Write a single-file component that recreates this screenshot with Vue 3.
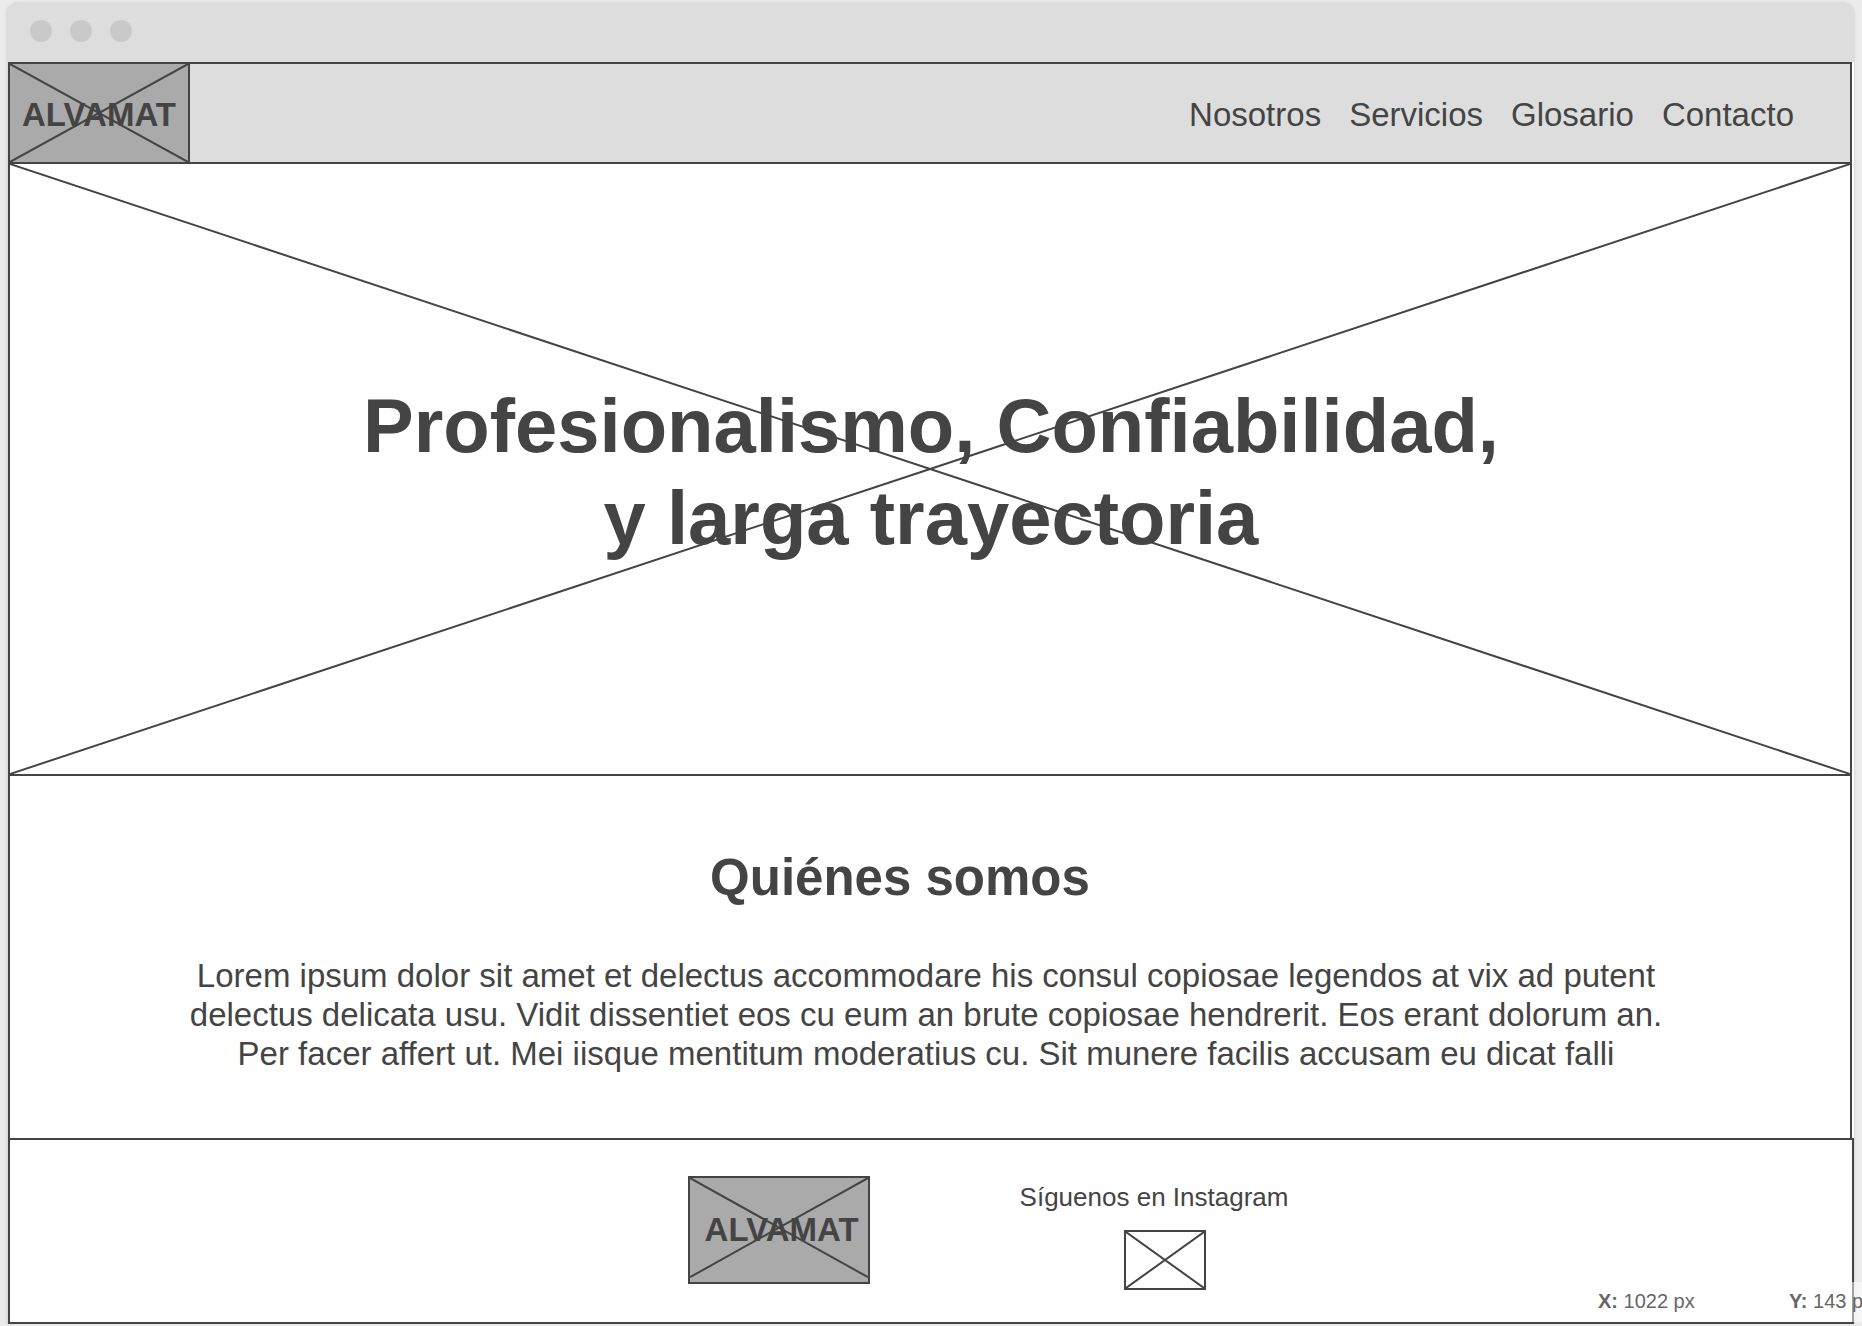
<script setup>
const links = ['Nosotros', 'Servicios', 'Glosario', 'Contacto']
const pointer = [
  { axis: 'X', value: 1022 },
  { axis: 'Y', value: 143 },
]
</script>

<template>
  <div class="canvas">
    <div class="window">
      <div class="titlebar">
        <span v-for="n in 3" :key="n" class="dot"></span>
      </div>
      <div class="page">
        <header class="topbar">
          <div class="logo">
            <svg class="cross" viewBox="0 0 100 100" preserveAspectRatio="none" aria-hidden="true">
              <path d="M0 0L100 100M100 0L0 100" />
            </svg>
            <span class="brand">ALVAMAT</span>
          </div>
          <nav class="nav">
            <a v-for="link in links" :key="link" href="#">{{ link }}</a>
          </nav>
        </header>

        <section class="hero">
          <svg class="cross" viewBox="0 0 100 100" preserveAspectRatio="none" aria-hidden="true">
            <path d="M0 0L100 100M100 0L0 100" />
          </svg>
          <h1>Profesionalismo, Confiabilidad,<br />y larga trayectoria</h1>
        </section>

        <section class="about">
          <h2>Quiénes somos</h2>
          <p>
            Lorem ipsum dolor sit amet et delectus accommodare his consul copiosae legendos at vix ad putent<br />
            delectus delicata usu. Vidit dissentiet eos cu eum an brute copiosae hendrerit. Eos erant dolorum an.<br />
            Per facer affert ut. Mei iisque mentitum moderatius cu. Sit munere facilis accusam eu dicat falli
          </p>
        </section>

        <footer class="footer">
          <div class="logo boxed">
            <svg class="cross" viewBox="0 0 100 108" preserveAspectRatio="none" aria-hidden="true">
              <path d="M0 0L100 103M100 0L0 103" />
            </svg>
            <span class="brand">ALVAMAT</span>
          </div>
          <div class="social">
            <span id="follow">Síguenos en Instagram</span>
            <a class="picture" href="#" aria-labelledby="follow">
              <svg class="cross" viewBox="0 0 100 100" preserveAspectRatio="none" aria-hidden="true">
                <path d="M0 0L100 100M100 0L0 100" />
              </svg>
            </a>
          </div>
        </footer>
      </div>
    </div>
    <div class="coords">
      <span v-for="p in pointer" :key="p.axis"><b>{{ p.axis }}:</b> {{ p.value }} px</span>
    </div>
  </div>
</template>

<style>
body {
  margin: 0;
  background: #ececec;
}
</style>

<style scoped>
.canvas {
  position: relative;
  overflow: hidden;
  padding: 2px 7px 2px 6px;
  background: #ececec;
  color: #444;
  font-family: "Liberation Sans", Arial, sans-serif;
}
.window {
  border-radius: 12px 12px 0 0;
  background: #ddd;
  box-shadow: 0 0 4px rgba(0, 0, 0, 0.06);
}
.titlebar {
  box-sizing: border-box;
  height: 60px;
  padding: 18px 24px;
  display: flex;
  gap: 18px;
}
.dot {
  width: 22px;
  height: 22px;
  border-radius: 50%;
  background: #c9c9c9;
}
.page {
  margin: 0 1px 0 2px;
  background: #fff;
}
.topbar,
.hero,
.about {
  margin-right: 2px;
  border: 2px solid #444;
}
.topbar {
  display: flex;
  justify-content: space-between;
  background: #ddd;
}
.logo {
  position: relative;
  box-sizing: border-box;
  width: 180px;
  min-height: 98px;
  padding-top: 4px;
  display: flex;
  align-items: center;
  justify-content: center;
  border-right: 2px solid #444;
  background: #aaa;
}
.logo.boxed {
  width: 182px;
  height: 108px;
  padding: 0 0 0 6px;
  border: 2px solid #444;
}
.brand {
  position: relative;
  font-size: 33px;
  font-weight: bold;
}
.cross {
  position: absolute;
  inset: 0;
  width: 100%;
  height: 100%;
}
.cross path {
  fill: none;
  stroke: #444;
  stroke-width: 2px;
  vector-effect: non-scaling-stroke;
}
.nav {
  display: flex;
  align-items: center;
  gap: 28px;
  padding: 4px 56px 0 0;
  font-size: 33px;
}
.nav a {
  color: inherit;
  text-decoration: none;
}
.hero {
  position: relative;
  box-sizing: border-box;
  min-height: 612px;
  padding: 216px 0 0 2px;
  border-top: 0;
  text-align: center;
}
h1 {
  position: relative;
  margin: 0;
  font-size: 76px;
  line-height: 92px;
}
.about {
  padding: 72px 8px 65px 0;
  border-top: 0;
  text-align: center;
}
h2 {
  margin: 0 52px 48px 0;
  font-size: 51px;
  line-height: 60px;
}
p {
  margin: 0;
  font-size: 33px;
  line-height: 39px;
}
.footer {
  box-sizing: border-box;
  min-height: 186px;
  margin-top: -2px;
  padding: 36px 0 32px 114px;
  display: flex;
  justify-content: center;
  align-items: flex-start;
  gap: 150px;
  border: 2px solid #444;
}
.social {
  padding-top: 6px;
  display: flex;
  flex-direction: column;
  align-items: center;
  gap: 18px;
  font-size: 26px;
  line-height: 30px;
}
.picture {
  position: relative;
  box-sizing: border-box;
  width: 82px;
  height: 60px;
  margin-left: 22px;
  border: 2px solid #444;
}
.coords {
  position: absolute;
  right: 0;
  bottom: 4px;
  box-sizing: border-box;
  width: 280px;
  height: 40px;
  padding-left: 16px;
  display: flex;
  overflow: hidden;
  background: rgba(255, 255, 255, 0.5);
  color: #666;
  font-size: 20px;
  line-height: 38px;
  white-space: nowrap;
}
.coords span {
  flex: 0 0 191px;
}
</style>
